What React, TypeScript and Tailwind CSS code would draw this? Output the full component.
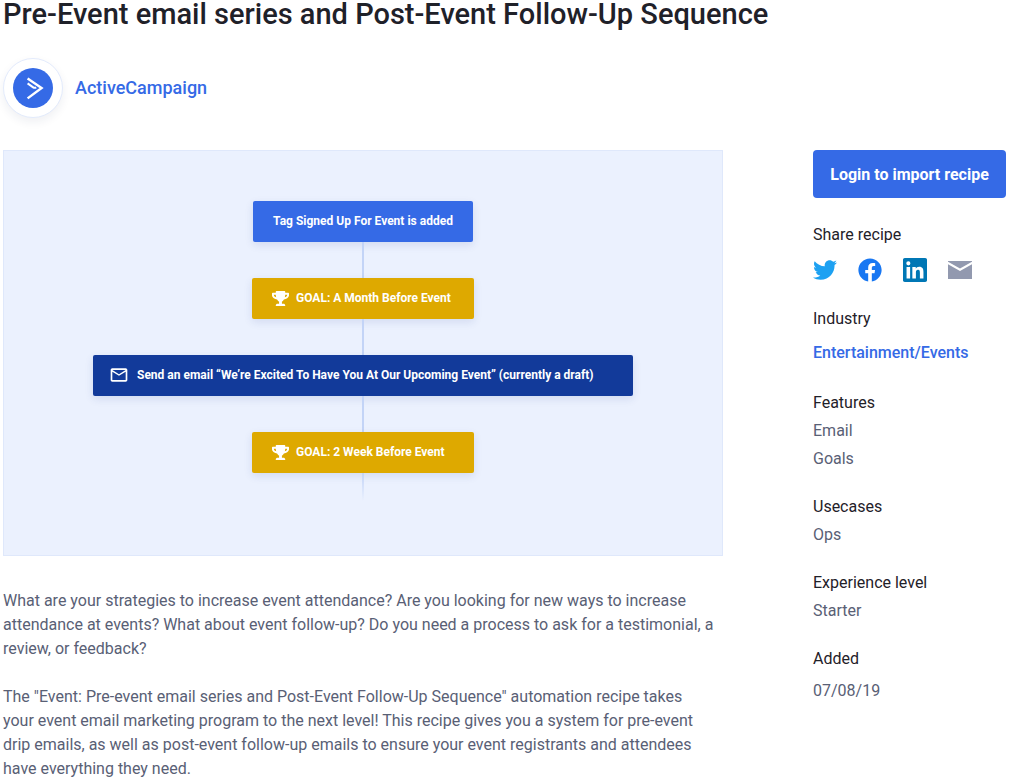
import type { ReactNode } from 'react';
import { FaFacebook, FaTrophy, FaTwitter } from 'react-icons/fa';
import { MdMailOutline } from 'react-icons/md';

function BrandMark() {
  return (
    <svg viewBox="0 0 40 40" className="size-10" aria-hidden="true">
      <circle cx="20" cy="20" r="20" fill="#356ae6" />
      <path d="M14.6 10.4 28.6 20 14.6 30.4" fill="none" stroke="#fff" strokeWidth="2.4" />
      <path d="M14.6 15.4 20.2 19.3q1.5 1 3 0" fill="none" stroke="#fff" strokeWidth="2.1" />
    </svg>
  );
}

function LinkedInIcon() {
  return (
    <svg viewBox="0 0 24 24" className="size-6" fill="#0077b5" aria-hidden="true">
      <path d="M20.447 20.452h-3.554v-5.569c0-1.328-.027-3.037-1.852-3.037-1.853 0-2.136 1.445-2.136 2.939v5.667H9.351V9h3.414v1.561h.046c.477-.9 1.637-1.85 3.37-1.85 3.601 0 4.267 2.37 4.267 5.455v6.286zM5.337 7.433a2.062 2.062 0 0 1-2.063-2.065 2.064 2.064 0 1 1 2.063 2.065zm1.782 13.019H3.555V9h3.564v11.452zM22.225 0H1.771C.792 0 0 .774 0 1.729v20.542C0 23.227.792 24 1.771 24h20.451C23.2 24 24 23.227 24 22.271V1.729C24 .774 23.2 0 22.222 0h.003z" />
    </svg>
  );
}

function MailIcon() {
  return (
    <svg viewBox="0 0 24 24" className="size-6" aria-hidden="true">
      <path d="M0 3h24v.8L12 10.5 0 3.8z" fill="#9299af" />
      <path d="M0 6.3l12 6.7 12-6.7V21H0z" fill="#9299af" />
    </svg>
  );
}

function Node({ tone, icon, children }: { tone: string; icon?: ReactNode; children: ReactNode }) {
  return (
    <div
      className={`flex h-[41px] items-center rounded-xs pb-0.5 text-xs font-bold text-white shadow-[0_3px_8px_rgba(30,60,140,0.12)] ${tone}`}
    >
      {icon}
      <span>{children}</span>
    </div>
  );
}

function Connector() {
  return <div className="h-9 w-0.5 bg-[#c3d4f7]" />;
}

function Section({ title, children }: { title: string; children: ReactNode }) {
  return (
    <section className="mt-5">
      <h2 className="leading-7 text-[#1f2129]">{title}</h2>
      {children}
    </section>
  );
}

const shareLinks = [
  { label: 'Share on Twitter', icon: <FaTwitter className="size-6 text-[#1da1f2]" /> },
  { label: 'Share on Facebook', icon: <FaFacebook className="size-6 text-[#1877f2]" /> },
  { label: 'Share on LinkedIn', icon: <LinkedInIcon /> },
  { label: 'Share by email', icon: <MailIcon /> },
];

export default function App() {
  return (
    <main className="bg-white pr-[11px] pb-1 pl-[3px] font-[Roboto,sans-serif] text-base text-[#596075]">
      <h1 className="text-[29px] leading-7 font-medium text-[#1f2129]">
        Pre-Event email series and Post-Event Follow-Up Sequence
      </h1>

      <a href="#author" className="mt-[30px] inline-flex items-center gap-3 text-lg font-medium text-[#356ae6]">
        <span className="flex size-[60px] items-center justify-center rounded-full border border-[#e3ebfc] bg-white shadow-[0_4px_10px_rgba(30,40,80,0.07)]">
          <BrandMark />
        </span>
        ActiveCampaign
      </a>

      <div className="mt-8 flex items-start justify-between">
        <article className="w-full max-w-[720px]">
          <div className="flex h-[406px] flex-col items-center border border-[#dfe8fb] bg-[#ebf1fe] pt-[50px]">
            <Node tone="bg-[#356ae6] w-[220px] justify-center">Tag Signed Up For Event is added</Node>
            <Connector />
            <Node
              tone="bg-[#dea900] w-[222px] pl-5 gap-[7px]"
              icon={<FaTrophy className="mt-0.5 size-[17px]" aria-hidden="true" />}
            >
              GOAL: A Month Before Event
            </Node>
            <Connector />
            <Node
              tone="bg-[#123a9a] w-[540px] pl-4 gap-2"
              icon={<MdMailOutline className="size-5" aria-hidden="true" />}
            >
              Send an email “We’re Excited To Have You At Our Upcoming Event” (currently a draft)
            </Node>
            <Connector />
            <Node
              tone="bg-[#dea900] w-[222px] pl-5 gap-[7px]"
              icon={<FaTrophy className="mt-0.5 size-[17px]" aria-hidden="true" />}
            >
              GOAL: 2 Week Before Event
            </Node>
            <div className="h-7 w-0.5 bg-linear-to-b from-[#c3d4f7] to-[#ebf1fe]" />
          </div>

          <div className="mt-[33px] space-y-6 pr-2 leading-6">
            <p>
              What are your strategies to increase event attendance? Are you looking for new ways to increase
              attendance at events? What about event follow-up? Do you need a process to ask for a
              testimonial, a review, or feedback?
            </p>
            <p>
              The "Event: Pre-event email series and Post-Event Follow-Up Sequence" automation recipe takes
              your event email marketing program to the next level! This recipe gives you a system for
              pre-event drip emails, as well as post-event follow-up emails to ensure your event registrants
              and attendees have everything they need.
            </p>
          </div>
        </article>

        <aside className="w-[193px] shrink-0">
          <button type="button" className="h-12 w-full rounded bg-[#356ae6] pt-0.5 font-bold text-white">
            Login to import recipe
          </button>

          <h2 className="mt-[23px] leading-7 text-[#1f2129]">Share recipe</h2>
          <div className="mt-[9px] mb-[23px] flex gap-[21px]">
            {shareLinks.map((link) => (
              <a key={link.label} href="#share" aria-label={link.label}>
                {link.icon}
              </a>
            ))}
          </div>

          <Section title="Industry">
            <a href="#industry" className="mt-1 block leading-8 font-medium text-[#356ae6]">
              Entertainment/Events
            </a>
          </Section>
          <Section title="Features">
            <p className="leading-7">Email</p>
            <p className="leading-7">Goals</p>
          </Section>
          <Section title="Usecases">
            <p className="leading-7">Ops</p>
          </Section>
          <Section title="Experience level">
            <p className="leading-7">Starter</p>
          </Section>
          <Section title="Added">
            <p className="mt-1 leading-7">07/08/19</p>
          </Section>
        </aside>
      </div>
    </main>
  );
}
